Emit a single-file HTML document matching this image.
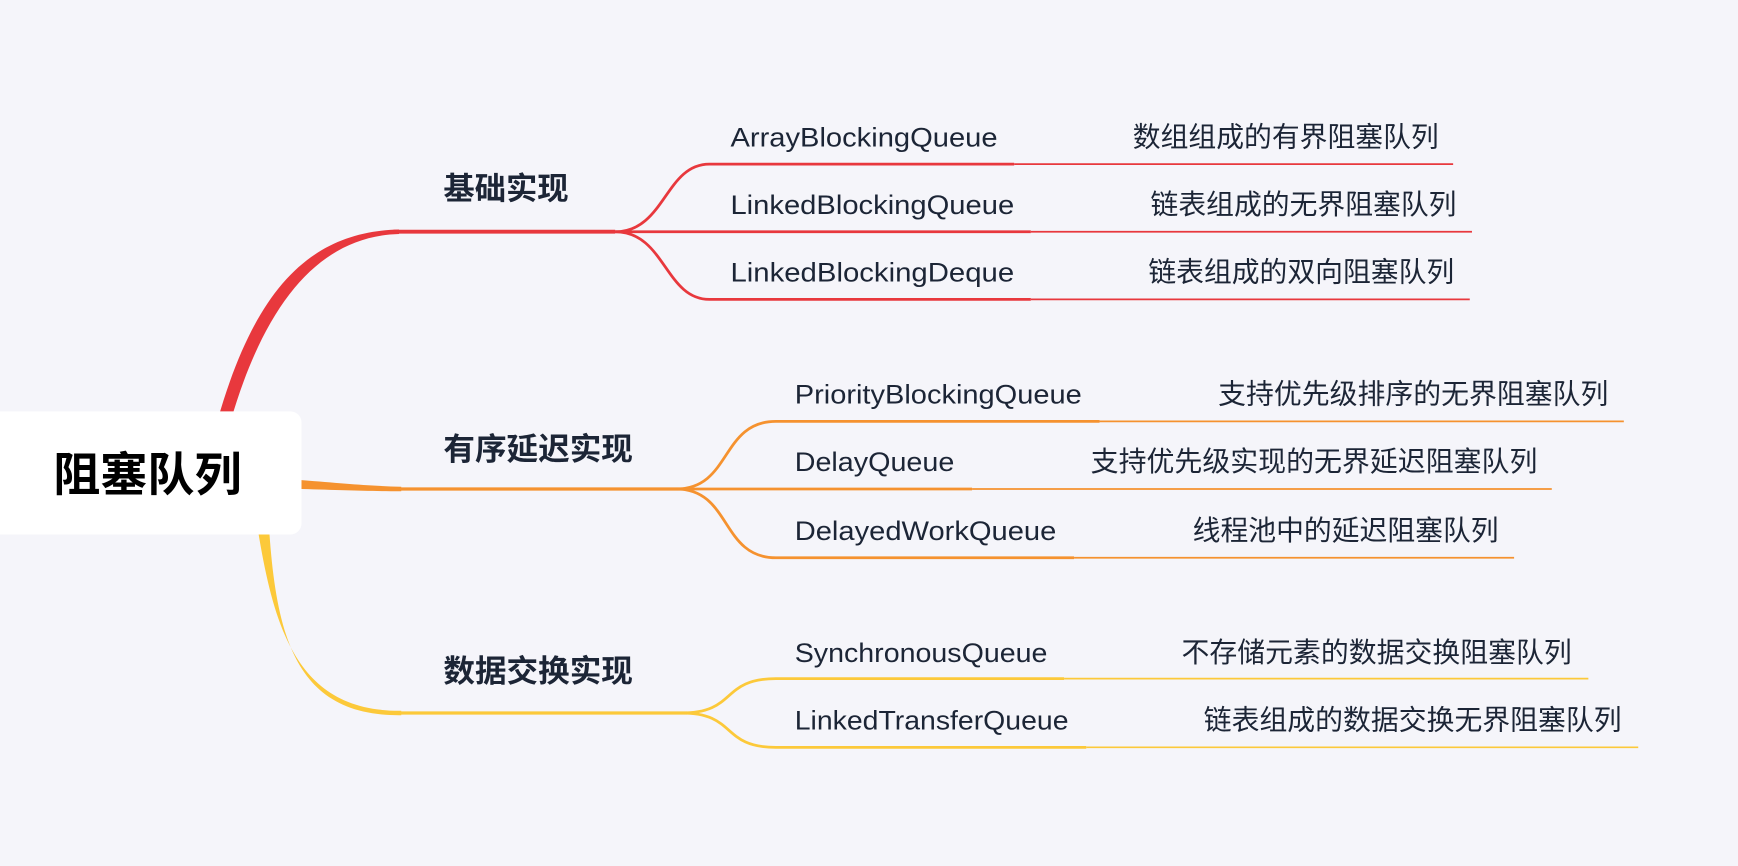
<!DOCTYPE html>
<html><head><meta charset="utf-8"><style>
html,body{margin:0;padding:0;background:#f5f5fa;}
svg{display:block}
text{font-family:"Liberation Sans","Noto Sans CJK SC",sans-serif;fill:#1c2536}
.sub{font-size:28px;font-weight:bold}
.c{font-size:24px}
.d{font-size:25px}
</style></head><body>
<svg width="1738" height="866" viewBox="0 0 1568 781" preserveAspectRatio="none" xmlns="http://www.w3.org/2000/svg">
<rect width="1568" height="781" fill="#f5f5fa"/>
<path d="M196,380 C230,260 280,209 360,207 L360,211 C290,213 240,270 208,380 Z" fill="#e8383d"/>
<path d="M355,209 L555,209" stroke="#e8383d" stroke-width="3.5" fill="none"/>
<g stroke="#e8383d" fill="none" stroke-width="2.5">
<path d="M555,209 C600,209 600,148 640,148 L915,148"/>
<path d="M555,209 L930,209"/>
<path d="M555,209 C600,209 600,270 640,270 L930,270"/>
</g>
<g stroke="#e8383d" fill="none" stroke-width="1.5">
<path d="M915,148 L1311,148"/><path d="M930,209 L1328,209"/><path d="M930,270 L1326,270"/>
</g>
<path d="M272,433 C310,436 330,438 362,439 L362,443 C330,443 310,442 272,441 Z" fill="#f5922f"/>
<path d="M360,441 L615,441" stroke="#f5922f" stroke-width="3" fill="none"/>
<g stroke="#f5922f" fill="none" stroke-width="2.5">
<path d="M610,441 C660,441 650,380 700,380 L992,380"/>
<path d="M610,441 L877,441"/>
<path d="M610,441 C660,441 650,503 700,503 L969,503"/>
</g>
<g stroke="#f5922f" fill="none" stroke-width="1.5">
<path d="M992,380 L1465,380"/><path d="M877,441 L1400,441"/><path d="M969,503 L1366,503"/>
</g>
<path d="M233,480 C248,570 270,642 362,641 L362,645 C270,646 250,580 243,480 Z" fill="#fcc93a"/>
<path d="M360,643 L620,643" stroke="#fcc93a" stroke-width="3" fill="none"/>
<g stroke="#fcc93a" fill="none" stroke-width="2.5">
<path d="M615,643 C665,643 650,612 700,612 L960,612"/>
<path d="M615,643 C665,643 650,674 700,674 L980,674"/>
</g>
<g stroke="#fcc93a" fill="none" stroke-width="1.5">
<path d="M960,612 L1433,612"/><path d="M980,674 L1478,674"/>
</g>
<rect x="-10" y="371" width="282" height="111" rx="10" fill="#fff"/>
<g lengthAdjust="spacingAndGlyphs">
<text x="48" y="443" style="font-size:42px;font-weight:bold;fill:#000" textLength="170" lengthAdjust="spacingAndGlyphs">阻塞队列</text>
<text class="sub" x="400" y="180" textLength="113" lengthAdjust="spacingAndGlyphs">基础实现</text>
<text class="sub" x="400" y="415" textLength="171" lengthAdjust="spacingAndGlyphs">有序延迟实现</text>
<text class="sub" x="400" y="615" textLength="171" lengthAdjust="spacingAndGlyphs">数据交换实现</text>
<text class="c" x="659" y="132" textLength="241" lengthAdjust="spacingAndGlyphs">ArrayBlockingQueue</text>
<text class="c" x="659" y="193" textLength="256" lengthAdjust="spacingAndGlyphs">LinkedBlockingQueue</text>
<text class="c" x="659" y="254" textLength="256" lengthAdjust="spacingAndGlyphs">LinkedBlockingDeque</text>
<text class="c" x="717" y="364" textLength="259" lengthAdjust="spacingAndGlyphs">PriorityBlockingQueue</text>
<text class="c" x="717" y="425" textLength="144" lengthAdjust="spacingAndGlyphs">DelayQueue</text>
<text class="c" x="717" y="487" textLength="236" lengthAdjust="spacingAndGlyphs">DelayedWorkQueue</text>
<text class="c" x="717" y="597" textLength="228" lengthAdjust="spacingAndGlyphs">SynchronousQueue</text>
<text class="c" x="717" y="658" textLength="247" lengthAdjust="spacingAndGlyphs">LinkedTransferQueue</text>
<text class="d" x="1022" y="132" textLength="276" lengthAdjust="spacingAndGlyphs">数组组成的有界阻塞队列</text>
<text class="d" x="1038" y="193" textLength="276" lengthAdjust="spacingAndGlyphs">链表组成的无界阻塞队列</text>
<text class="d" x="1036" y="254" textLength="276" lengthAdjust="spacingAndGlyphs">链表组成的双向阻塞队列</text>
<text class="d" x="1099" y="364" textLength="352" lengthAdjust="spacingAndGlyphs">支持优先级排序的无界阻塞队列</text>
<text class="d" x="984" y="425" textLength="403" lengthAdjust="spacingAndGlyphs">支持优先级实现的无界延迟阻塞队列</text>
<text class="d" x="1076" y="487" textLength="276" lengthAdjust="spacingAndGlyphs">线程池中的延迟阻塞队列</text>
<text class="d" x="1066" y="597" textLength="352" lengthAdjust="spacingAndGlyphs">不存储元素的数据交换阻塞队列</text>
<text class="d" x="1086" y="658" textLength="377" lengthAdjust="spacingAndGlyphs">链表组成的数据交换无界阻塞队列</text>
</g>
</svg>
</body></html>
